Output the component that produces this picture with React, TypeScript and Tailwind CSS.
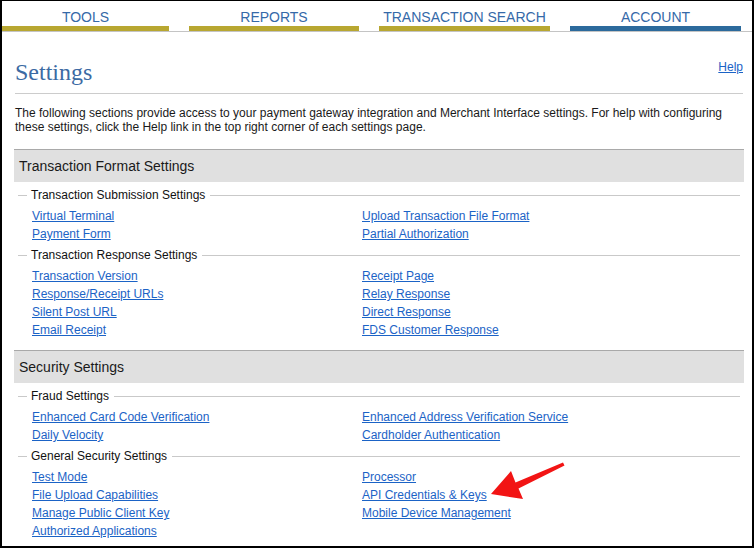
import React from "react";

const tabs = [
  { label: "TOOLS", w: "w-[167px]", bar: "bg-[#b8a731]" },
  { label: "REPORTS", w: "w-[170px]", bar: "bg-[#b8a731]" },
  { label: "TRANSACTION SEARCH", w: "w-[171px]", bar: "bg-[#b8a731]" },
  { label: "ACCOUNT", w: "w-[171px]", bar: "bg-[#2c6a9c]" },
];

type Group = { title: string; left: string[]; right: string[] };

const sections: { title: string; groups: Group[] }[] = [
  {
    title: "Transaction Format Settings",
    groups: [
      {
        title: "Transaction Submission Settings",
        left: ["Virtual Terminal", "Payment Form"],
        right: ["Upload Transaction File Format", "Partial Authorization"],
      },
      {
        title: "Transaction Response Settings",
        left: ["Transaction Version", "Response/Receipt URLs", "Silent Post URL", "Email Receipt"],
        right: ["Receipt Page", "Relay Response", "Direct Response", "FDS Customer Response"],
      },
    ],
  },
  {
    title: "Security Settings",
    groups: [
      {
        title: "Fraud Settings",
        left: ["Enhanced Card Code Verification", "Daily Velocity"],
        right: ["Enhanced Address Verification Service", "Cardholder Authentication"],
      },
      {
        title: "General Security Settings",
        left: ["Test Mode", "File Upload Capabilities", "Manage Public Client Key", "Authorized Applications"],
        right: ["Processor", "API Credentials & Keys", "Mobile Device Management"],
      },
    ],
  },
];

function LinkCol({ items }: { items: string[] }) {
  return (
    <div className="flex flex-col">
      {items.map((t) => (
        <div key={t} className="h-[18px] flex items-center">
          <a href="#" className="text-[12px] leading-[14px] text-[#1b63c6] underline underline-offset-[1px]">
            {t}
          </a>
        </div>
      ))}
    </div>
  );
}

function GroupBlock({ g, first }: { g: Group; first: boolean }) {
  return (
    <div className={first ? "mt-[4px]" : "mt-[3px]"}>
      <div className="h-[18px] flex items-center pl-[4px] pr-[4px]">
        <div className="w-[9px] h-px bg-[#c9c9c9]" />
        <span className="ml-[4px] mr-[5px] text-[12px] leading-[14px] text-[#111]">{g.title}</span>
        <div className="flex-1 h-px bg-[#c9c9c9]" />
      </div>
      <div className="mt-[3px] grid grid-cols-[330px_1fr] pl-[18px]">
        <LinkCol items={g.left} />
        <LinkCol items={g.right} />
      </div>
    </div>
  );
}

export default function App() {
  return (
    <div
      className="relative w-[754px] h-[548px] overflow-hidden bg-white border-l-2 border-t border-r-2 border-b-2 border-black"
      style={{ fontFamily: '"Liberation Sans", Arial, sans-serif' }}
    >
      {/* Nav */}
      <div className="flex gap-[20px] border-b border-[#c4c4c4]">
        {tabs.map((t) => (
          <div key={t.label} className={`${t.w} flex flex-col`}>
            <div className="h-[25px] flex items-end justify-center pb-[1px]">
              <span className="text-[14px] leading-[16px] text-[#3569a8]">{t.label}</span>
            </div>
            <div className={`h-[5px] ${t.bar}`} />
          </div>
        ))}
      </div>

      <div className="pl-[12px] pr-[8px]">
        {/* Header */}
        <div className="mx-[1px] pt-[26px] pb-[7px] border-b border-[#cccccc] flex justify-between items-start">
          <h1
            className="text-[24px] leading-[28px] text-[#3b6aa3]"
            style={{ fontFamily: '"Liberation Serif", "Times New Roman", serif' }}
          >
            Settings
          </h1>
          <a href="#" className="mt-[2px] text-[12px] leading-[14px] text-[#1b63c6] underline">
            Help
          </a>
        </div>

        <p className="mt-[12px] mx-[1px] text-[12px] leading-[14px] text-[#1a1a1a]">
          The following sections provide access to your payment gateway integration and Merchant Interface settings. For help with configuring
          <br />
          these settings, click the Help link in the top right corner of each settings page.
        </p>

        {sections.map((s, i) => (
          <div key={s.title} className={i === 0 ? "mt-[15px]" : "mt-[11px]"}>
            <div className="h-[33px] border-t border-[#a9a9a9] bg-[#e0e0e0] flex items-center pl-[5px]">
              <span className="text-[14px] leading-[16px] text-[#1a1a1a]">{s.title}</span>
            </div>
            {s.groups.map((g, j) => (
              <GroupBlock key={g.title} g={g} first={j === 0} />
            ))}
          </div>
        ))}
      </div>

      {/* Red arrow annotation */}
      <svg className="absolute left-0 top-0 pointer-events-none" width="754" height="548" viewBox="0 0 754 548">
        <polygon
          points="489,493 509,470 513.5,481.5 561,461.5 562.5,464.5 516.5,487.5 521,498"
          fill="#f21414"
        />
      </svg>
    </div>
  );
}
